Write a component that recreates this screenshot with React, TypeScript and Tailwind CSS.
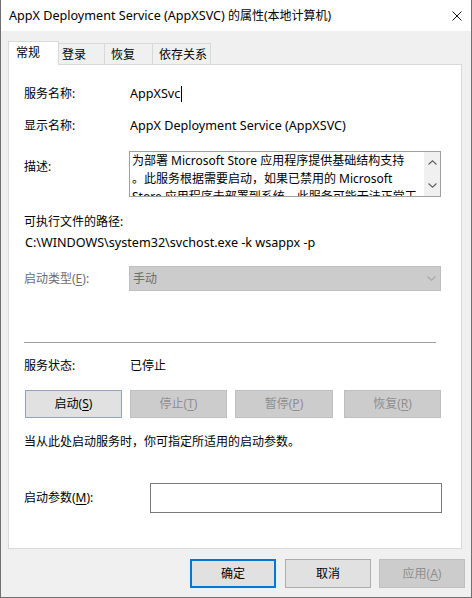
import React from "react";

const font = "[font-family:'Noto_Sans','Noto_Sans_CJK_SC',sans-serif]";

function Chevron({ up, color }: { up?: boolean; color: string }) {
  return (
    <svg width="9" height="5" viewBox="0 0 9 5" fill="none">
      <path
        d={up ? "M0.5 4.5 L4.5 0.8 L8.5 4.5" : "M0.5 0.5 L4.5 4.2 L8.5 0.5"}
        stroke={color}
        strokeWidth="1.1"
      />
    </svg>
  );
}

function Key({ k }: { k: string }) {
  return <span className="underline underline-offset-2">{k}</span>;
}

export default function App() {
  return (
    <div className={`${font} w-[472px] h-[598px] bg-[#f0f0f0] border-l border-r border-b border-[#707070] text-[12px] text-black overflow-hidden`}>
      {/* title bar */}
      <div className="h-[31px] bg-white flex items-center justify-between pl-[8px] pr-[9px]">
        <span className="leading-[20px]">
          <span className="text-[12.6px]">AppX Deployment Service (AppXSVC)</span> 的属性(本地计算机)
        </span>
        <svg width="10" height="10" viewBox="0 0 10 10">
          <path d="M0.5 0.5 L9.5 9.5 M9.5 0.5 L0.5 9.5" stroke="#111" strokeWidth="1" />
        </svg>
      </div>

      {/* tabs */}
      <div className="mt-[10px] ml-[7px] h-[23px] flex items-end">
        <div className="relative z-10 -mb-px h-[24px] w-[51px] bg-white border-l border-t border-r border-[#d9d9d9] pl-[7px] leading-[21px]">常规</div>
        <div className="h-[21px] w-[46px] border-t border-r border-[#d9d9d9] pl-[3px] leading-[21px]">登录</div>
        <div className="h-[21px] w-[48px] border-t border-r border-[#d9d9d9] pl-[6px] leading-[21px]">恢复</div>
        <div className="h-[21px] w-[58px] border-t border-r border-[#d9d9d9] pl-[6px] leading-[21px]">依存关系</div>
      </div>

      {/* panel */}
      <div className="ml-[7px] w-[454px] h-[485px] bg-white border border-[#d9d9d9]">
        <div className="mt-[19px] ml-[15px] h-[20px] flex items-center">
          <span className="w-[106px]">服务名称:</span>
          <span className="flex items-center text-[12.6px]">AppXSvc<span className="ml-px w-px h-[16px] bg-black" /></span>
        </div>
        <div className="mt-[12px] ml-[15px] h-[20px] flex items-center">
          <span className="w-[106px]">显示名称:</span>
          <span className="text-[12.6px]">AppX Deployment Service (AppXSVC)</span>
        </div>
        <div className="mt-[15px] ml-[15px] flex">
          <span className="w-[105px] pt-[6px] leading-[20px]">描述:</span>
          <div className="w-[312px] h-[46px] border border-[#a0a0a0] flex overflow-hidden">
            <div className="flex-1 pl-[2px] leading-[18px] whitespace-nowrap overflow-hidden">
              <div>为部署 Microsoft Store 应用程序提供基础结构支持</div>
              <div>。此服务根据需要启动，如果已禁用的 Microsoft</div>
              <div>Store 应用程序未部署到系统，此服务可能无法正常工</div>
            </div>
            <div className="w-[16px] h-full bg-[#f0f0f0] flex flex-col items-center justify-between py-[8px]">
              <Chevron up color="#606060" />
              <Chevron color="#606060" />
            </div>
          </div>
        </div>
        <div className="mt-[15px] ml-[15px] h-[20px] flex items-center">可执行文件的路径:</div>
        <div className="mt-[1px] ml-[16px] h-[20px] flex items-center text-[12.6px]">C:\WINDOWS\system32\svchost.exe -k wsappx -p</div>
        <div className="mt-[13px] ml-[15px] flex items-center">
          <span className="w-[105px] text-[#6d6d6d]">
            启动类型(<Key k="E" />):
          </span>
          <div className="w-[312px] h-[25px] bg-[#cccccc] border border-[#bfbfbf] flex items-center justify-between pl-[3px] pr-[4px] text-[#6d6d6d]">
            <span>手动</span>
            <Chevron color="#a6a6a6" />
          </div>
        </div>
        <div className="mt-[51px] ml-[15px] w-[412px] h-px bg-[#a0a0a0]" />
        <div className="mt-[13px] ml-[15px] h-[20px] flex items-center">
          <span className="w-[106px]">服务状态:</span>
          <span>已停止</span>
        </div>
        <div className="mt-[14px] ml-[16px] flex">
          <div className="w-[97px] h-[28px] bg-[#e1e1e1] border border-[#8ea4b9] flex items-center justify-center">
            启动(<Key k="S" />)
          </div>
          <div className="ml-[8px] w-[97px] h-[28px] bg-[#cccccc] border border-[#bfbfbf] text-[#8f8f8f] flex items-center justify-center">
            停止(<Key k="T" />)
          </div>
          <div className="ml-[8px] w-[98px] h-[28px] bg-[#cccccc] border border-[#bfbfbf] text-[#8f8f8f] flex items-center justify-center">
            暂停(<Key k="P" />)
          </div>
          <div className="ml-[11px] w-[97px] h-[28px] bg-[#cccccc] border border-[#bfbfbf] text-[#8f8f8f] flex items-center justify-center">
            恢复(<Key k="R" />)
          </div>
        </div>
        <div className="mt-[14px] ml-[15px] h-[20px] flex items-center">当从此处启动服务时，你可指定所适用的启动参数。</div>
        <div className="mt-[31px] ml-[15px] flex items-center">
          <span className="w-[126px]">
            启动参数(<Key k="M" />):
          </span>
          <div className="w-[292px] h-[30px] border border-[#7a7a7a] bg-white" />
        </div>
      </div>

      {/* dialog buttons */}
      <div className="mt-[10px] pr-[6px] flex justify-end">
        <div className="w-[86px] h-[29px] bg-[#e1e1e1] border-2 border-[#0078d7] flex items-center justify-center">确定</div>
        <div className="ml-[9px] w-[86px] h-[29px] bg-[#e1e1e1] border border-[#adadad] flex items-center justify-center">取消</div>
        <div className="ml-[8px] w-[86px] h-[29px] bg-[#cccccc] border border-[#bfbfbf] text-[#8f8f8f] flex items-center justify-center">
          应用(<Key k="A" />)
        </div>
      </div>
    </div>
  );
}
